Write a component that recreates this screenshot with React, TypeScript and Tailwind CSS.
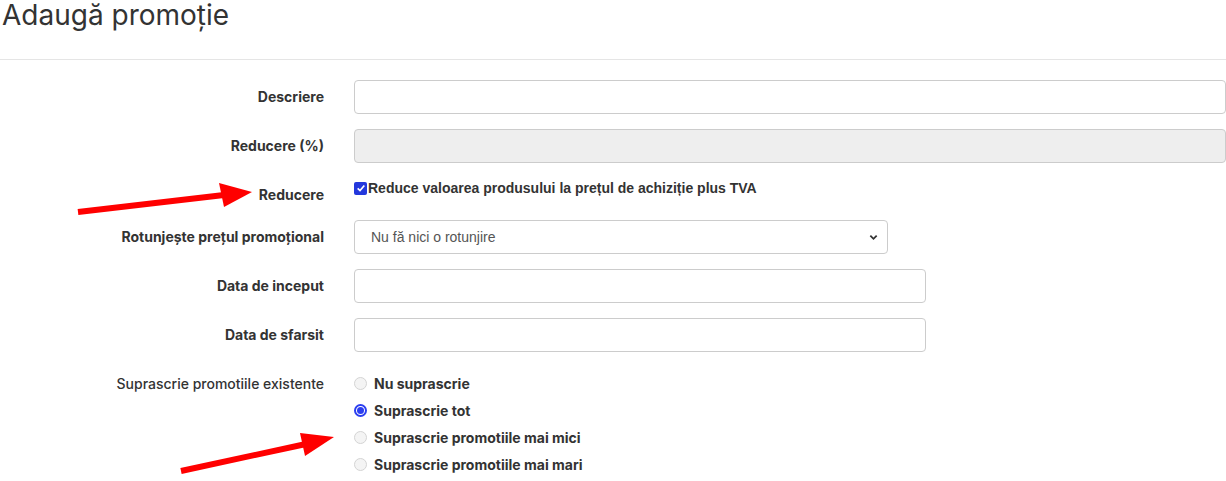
import { ReactNode } from 'react';

const labelCls =
  'w-[324px] shrink-0 text-right pt-[7px] leading-5 text-[14px] font-bold text-[#333]';

function Row({ label, children, bold = true }: { label: string; children: ReactNode; bold?: boolean }) {
  return (
    <div className="flex mb-[15px]">
      <label className={bold ? labelCls : labelCls.replace('font-bold', 'font-medium')}>{label}</label>
      <div className="flex-1 pl-[30px]">{children}</div>
    </div>
  );
}

function Radio({ checked, label }: { checked?: boolean; label: string }) {
  return (
    <div className="flex items-center h-[27px]">
      {checked ? (
        <span className="w-[13px] h-[13px] rounded-full border-2 border-[#2b3ef0] bg-white flex items-center justify-center">
          <span className="w-[7px] h-[7px] rounded-full bg-[#2b3ef0]" />
        </span>
      ) : (
        <span className="w-[13px] h-[13px] rounded-full border border-[#d4d4d4] bg-[#f4f4f4]" />
      )}
      <span className="ml-[7px] text-[14px] font-bold text-[#333]">{label}</span>
    </div>
  );
}

export default function App() {
  return (
    <div className="relative w-[1226px] h-[481px] overflow-hidden bg-white font-['Inter',sans-serif] text-[#333]">
      {/* Page header */}
      <h1 className="pl-[2px] text-[28px] leading-[30px] font-normal text-[#333]">Adaugă promoție</h1>
      <div className="mt-[29px] border-t border-[#e5e5e5]" />

      {/* Form */}
      <div className="pt-[20px]">
        <Row label="Descriere">
          <input className="block w-full h-[34px] rounded-[4px] border border-[#ccc] bg-white" />
        </Row>
        <Row label="Reducere (%)">
          <input disabled className="block w-full h-[34px] rounded-[4px] border border-[#ccc] bg-[#eee]" />
        </Row>
        <Row label="Reducere">
          <div className="flex items-center h-5 font-['Liberation_Sans',sans-serif] text-[14px] font-bold text-[#333]">
            <span className="w-[13px] h-[13px] rounded-[2px] bg-[#2438dc] flex items-center justify-center">
              <svg viewBox="0 0 12 12" className="w-[10px] h-[10px]">
                <path d="M2 6.5 L4.8 9 L10 3" fill="none" stroke="white" strokeWidth="2" />
              </svg>
            </span>
            <span className="ml-px">Reduce valoarea produsului la prețul de achiziție plus TVA</span>
          </div>
        </Row>
        <Row label="Rotunjește prețul promoțional">
          <div className="relative w-[534px]">
            <select className="block w-full h-[34px] appearance-none rounded-[4px] border border-[#ccc] bg-white pl-[16px] font-['Liberation_Sans',sans-serif] text-[14px] text-[#555]">
              <option>Nu fă nici o rotunjire</option>
            </select>
            <svg viewBox="0 0 10 10" className="absolute right-[10px] top-[13px] w-[9px] h-[9px] pointer-events-none">
              <path d="M1.5 3 L5 6.5 L8.5 3" fill="none" stroke="#333" strokeWidth="2" />
            </svg>
          </div>
        </Row>
        <Row label="Data de inceput">
          <input className="block w-[572px] h-[34px] rounded-[4px] border border-[#ccc] bg-white" />
        </Row>
        <Row label="Data de sfarsit">
          <input className="block w-[572px] h-[34px] rounded-[4px] border border-[#ccc] bg-white" />
        </Row>
        <Row label="Suprascrie promotiile existente" bold={false}>
          <div className="pt-[3px]">
            <Radio label="Nu suprascrie" />
            <Radio checked label="Suprascrie tot" />
            <Radio label="Suprascrie promotiile mai mici" />
            <Radio label="Suprascrie promotiile mai mari" />
          </div>
        </Row>
      </div>

      {/* Annotation arrows */}
      <svg className="absolute left-0 top-0 pointer-events-none" width="1226" height="481">
        <line x1="78" y1="212" x2="224" y2="195" stroke="#ff0000" strokeWidth="6" />
        <polygon points="219,183 252,192 224,207" fill="#ff0000" />
        <line x1="181" y1="471" x2="306" y2="444" stroke="#ff0000" strokeWidth="6" />
        <polygon points="300,433 334,437 305,456" fill="#ff0000" />
      </svg>
    </div>
  );
}
